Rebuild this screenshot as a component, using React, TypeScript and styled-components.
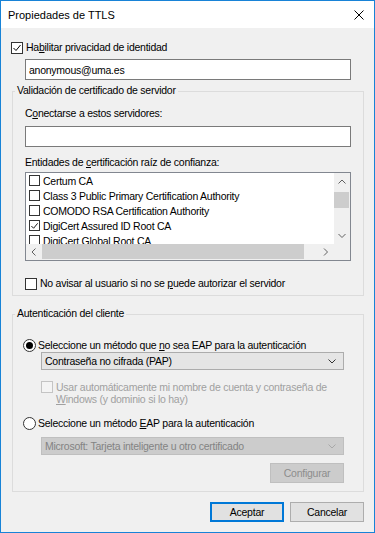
import React from "react";
import styled, { createGlobalStyle } from "styled-components";

const FONT = `"Liberation Sans", Arial, sans-serif`;

const Global = createGlobalStyle`
  html, body { margin: 0; padding: 0; background: #ffffff; }
  body {
    font-family: ${FONT};
    font-size: 10.5px;
    letter-spacing: -0.25px;
    color: #000;
  }
  * { box-sizing: border-box; }
`;

const Window = styled.div`
  width: 375px;
  height: 533px;
  border: 1px solid #1883d7;
  display: flex;
  flex-direction: column;
  background: #f0f0f0;
`;

const TitleBar = styled.div`
  height: 27px;
  flex: none;
  background: #ffffff;
  display: flex;
  align-items: center;
  justify-content: space-between;
  padding: 0 10px 0 7px;
  font-size: 11px;
  letter-spacing: 0;
`;

const Body = styled.div`
  flex: 1;
  display: flex;
  flex-direction: column;
  padding: 13px 9px 0 10px;
`;

const U = styled.span`
  text-decoration: underline;
  text-underline-offset: 1px;
`;

const CheckRow = styled.label<{ $mt?: number }>`
  margin-top: ${(p) => p.$mt ?? 0}px;
  display: flex;
  align-items: center;
  gap: 3px;
  line-height: 13px;
  white-space: nowrap;
`;

const Box = styled.span<{ $size?: number; $disabled?: boolean }>`
  flex: none;
  width: ${(p) => p.$size ?? 12}px;
  height: ${(p) => p.$size ?? 12}px;
  border: 1px solid ${(p) => (p.$disabled ? "#c4c4c4" : "#333333")};
  background: ${(p) => (p.$disabled ? "#f4f4f4" : "#ffffff")};
  display: inline-flex;
  align-items: center;
  justify-content: center;
`;

const TextInput = styled.div<{ $mt: number }>`
  margin-top: ${(p) => p.$mt}px;
  margin-left: 14px;
  width: 326px;
  height: 21px;
  flex: none;
  border: 1px solid #7a7a7a;
  background: #ffffff;
  display: flex;
  align-items: center;
  padding-left: 3px;
`;

const Group = styled.fieldset<{ $mt: number }>`
  margin: ${(p) => p.$mt}px 0 0 1px;
  width: 352px;
  padding: 0;
  border: 1px solid #dcdcdc;
  min-inline-size: 0;
`;

const Legend = styled.legend`
  margin-left: 2px;
  padding: 0 2px 2px;
  line-height: 12px;
`;

const GroupContent = styled.div<{ $pl: number; $pb: number }>`
  display: flex;
  flex-direction: column;
  padding: 0 0 ${(p) => p.$pb}px ${(p) => p.$pl}px;
`;

const FieldLabel = styled.div<{ $mt: number }>`
  margin-top: ${(p) => p.$mt}px;
  line-height: 13px;
`;

const InnerInput = styled(TextInput)`
  margin-left: 0;
`;

const ListBox = styled.div`
  margin-top: 3px;
  width: 326px;
  height: 89px;
  border: 1px solid #828790;
  background: #ffffff;
  display: grid;
  grid-template-columns: 1fr 16px;
  grid-template-rows: 1fr 16px;
`;

const ListItems = styled.div`
  overflow: hidden;
  padding-left: 3px;
`;

const ListRow = styled.div`
  height: 15px;
  display: flex;
  align-items: center;
  gap: 3px;
  white-space: nowrap;
`;

const VScroll = styled.div`
  background: #f0f0f0;
  display: flex;
  flex-direction: column;
`;

const HScroll = styled.div`
  background: #f0f0f0;
  display: flex;
`;

const Corner = styled.div`
  background: #f0f0f0;
`;

const ArrowBtn = styled.div<{ $w: number; $h: number }>`
  flex: none;
  width: ${(p) => p.$w}px;
  height: ${(p) => p.$h}px;
  display: flex;
  align-items: center;
  justify-content: center;
`;

const Thumb = styled.div<{ $w: number; $h: number; $mt?: number }>`
  flex: none;
  width: ${(p) => p.$w}px;
  height: ${(p) => p.$h}px;
  margin-top: ${(p) => p.$mt ?? 0}px;
  background: #cdcdcd;
`;

const Spacer = styled.div`
  flex: 1;
`;

const RadioRow = styled.label<{ $mt: number }>`
  margin-top: ${(p) => p.$mt}px;
  display: flex;
  align-items: center;
  gap: 2px;
  line-height: 13px;
  white-space: nowrap;
`;

const Radio = styled.span<{ $checked?: boolean }>`
  flex: none;
  width: 13px;
  height: 13px;
  border-radius: 50%;
  border: 1px solid #333333;
  background: #ffffff;
  display: inline-flex;
  align-items: center;
  justify-content: center;
  &::after {
    content: "";
    width: 7px;
    height: 7px;
    border-radius: 50%;
    background: ${(p) => (p.$checked ? "#000000" : "transparent")};
  }
`;

const Indented = styled.div`
  margin-left: 18px;
  width: 303px;
  display: flex;
  flex-direction: column;
`;

const Combo = styled.div<{ $mt: number; $disabled?: boolean }>`
  margin-top: ${(p) => p.$mt}px;
  height: 18px;
  border: 1px solid ${(p) => (p.$disabled ? "#bfbfbf" : "#acacac")};
  background: ${(p) => (p.$disabled ? "#cccccc" : "#e5e5e5")};
  color: ${(p) => (p.$disabled ? "#838383" : "#000000")};
  display: flex;
  align-items: center;
  justify-content: space-between;
  padding: 0 7px 0 3px;
`;

const DisabledCheck = styled.div`
  margin-top: 11px;
  display: flex;
  align-items: flex-start;
  gap: 3px;
  color: #a0a0a0;
  line-height: 12px;
`;

const Push = styled.button<{ $mt?: number; $variant?: "default" | "disabled" | "normal" }>`
  margin-top: ${(p) => p.$mt ?? 0}px;
  width: 74px;
  height: 20px;
  padding: 0;
  font: inherit;
  letter-spacing: inherit;
  color: ${(p) => (p.$variant === "disabled" ? "#8d8d8d" : "#000000")};
  background: ${(p) => (p.$variant === "disabled" ? "#cccccc" : "#e1e1e1")};
  border: ${(p) =>
    p.$variant === "default"
      ? "2px solid #0078d7"
      : p.$variant === "disabled"
      ? "1px solid #bfbfbf"
      : "1px solid #adadad"};
`;

const RightAlign = styled.div`
  display: flex;
  justify-content: flex-end;
`;

const Footer = styled.div`
  margin-top: 10px;
  padding-right: 1px;
  display: flex;
  justify-content: flex-end;
  gap: 6px;
`;

const Check = () => (
  <svg width="10" height="10" viewBox="0 0 10 10">
    <polyline points="1.5,5 4,7.5 8.5,2" fill="none" stroke="#000" strokeWidth="1" />
  </svg>
);

const Chevron = ({ dir, color = "#606060" }: { dir: "up" | "down" | "left" | "right"; color?: string }) => {
  const pts =
    dir === "up"
      ? "0.5,4.5 4,1 7.5,4.5"
      : dir === "down"
      ? "0.5,1 4,4.5 7.5,1"
      : dir === "left"
      ? "4.5,0.5 1,4 4.5,7.5"
      : "1,0.5 4.5,4 1,7.5";
  const horiz = dir === "up" || dir === "down";
  return (
    <svg width={horiz ? 8 : 6} height={horiz ? 6 : 8} viewBox={horiz ? "0 0 8 6" : "0 0 6 8"}>
      <polyline points={pts} fill="none" stroke={color} strokeWidth="1" />
    </svg>
  );
};

const ComboArrow = ({ color }: { color: string }) => (
  <svg width="8" height="5" viewBox="0 0 8 5">
    <polyline points="0.5,0.5 4,4 7.5,0.5" fill="none" stroke={color} strokeWidth="1" />
  </svg>
);

const CloseIcon = () => (
  <svg width="10" height="10" viewBox="0 0 10 10">
    <path d="M0.5 0.5 L9.5 9.5 M9.5 0.5 L0.5 9.5" stroke="#000" strokeWidth="1" fill="none" />
  </svg>
);

const certs = [
  { name: "Certum CA", checked: false },
  { name: "Class 3 Public Primary Certification Authority", checked: false },
  { name: "COMODO RSA Certification Authority", checked: false },
  { name: "DigiCert Assured ID Root CA", checked: true },
  { name: "DigiCert Global Root CA", checked: false },
];

export default function App() {
  return (
    <>
      <Global />
      <Window>
        <TitleBar>
          <span>Propiedades de TTLS</span>
          <CloseIcon />
        </TitleBar>
        <Body>
          <CheckRow>
            <Box>
              <Check />
            </Box>
            <span>
              Ha<U>b</U>ilitar privacidad de identidad
            </span>
          </CheckRow>
          <TextInput $mt={5}>anonymous@uma.es</TextInput>

          <Group $mt={4}>
            <Legend>Validación de certificado de servidor</Legend>
            <GroupContent $pl={12} $pb={5}>
              <FieldLabel $mt={9}>
                C<U>o</U>nectarse a estos servidores:
              </FieldLabel>
              <InnerInput $mt={6} />
              <FieldLabel $mt={9}>
                Entidades de <U>c</U>ertificación raíz de confianza:
              </FieldLabel>
              <ListBox>
                <ListItems>
                  {certs.map((c) => (
                    <ListRow key={c.name}>
                      <Box $size={11}>{c.checked && <Check />}</Box>
                      <span>{c.name}</span>
                    </ListRow>
                  ))}
                </ListItems>
                <VScroll>
                  <ArrowBtn $w={16} $h={17}>
                    <Chevron dir="up" />
                  </ArrowBtn>
                  <Thumb $w={15} $h={16} $mt={2} />
                  <Spacer />
                  <ArrowBtn $w={16} $h={17}>
                    <Chevron dir="down" />
                  </ArrowBtn>
                </VScroll>
                <HScroll>
                  <ArrowBtn $w={16} $h={16}>
                    <Chevron dir="left" />
                  </ArrowBtn>
                  <Thumb $w={262} $h={15} />
                  <Spacer />
                  <ArrowBtn $w={16} $h={16}>
                    <Chevron dir="right" />
                  </ArrowBtn>
                </HScroll>
                <Corner />
              </ListBox>
              <CheckRow $mt={16}>
                <Box />
                <span>
                  No avisar al usuario si no se <U>p</U>uede autorizar el servidor
                </span>
              </CheckRow>
            </GroupContent>
          </Group>

          <Group $mt={11}>
            <Legend>Autenticación del cliente</Legend>
            <GroupContent $pl={10} $pb={8}>
              <RadioRow $mt={18}>
                <Radio $checked />
                <span>
                  Seleccione un método que <U>n</U>o sea EAP para la autenticación
                </span>
              </RadioRow>
              <Indented>
                <Combo $mt={0}>
                  <span>Contraseña no cifrada (PAP)</span>
                  <ComboArrow color="#333333" />
                </Combo>
                <DisabledCheck>
                  <Box $disabled />
                  <span>
                    Usar automáticamente mi nombre de cuenta y contraseña de
                    <br />
                    <U>W</U>indows (y dominio si lo hay)
                  </span>
                </DisabledCheck>
              </Indented>
              <RadioRow $mt={12}>
                <Radio />
                <span>
                  Seleccione un método <U>E</U>AP para la autenticación
                </span>
              </RadioRow>
              <Indented>
                <Combo $mt={7} $disabled>
                  <span>Microsoft: Tarjeta inteligente u otro certificado</span>
                  <ComboArrow color="#a8a8a8" />
                </Combo>
                <RightAlign>
                  <Push $mt={8} $variant="disabled">
                    Configurar
                  </Push>
                </RightAlign>
              </Indented>
            </GroupContent>
          </Group>

          <Footer>
            <Push $variant="default">Aceptar</Push>
            <Push $variant="normal">Cancelar</Push>
          </Footer>
        </Body>
      </Window>
    </>
  );
}
